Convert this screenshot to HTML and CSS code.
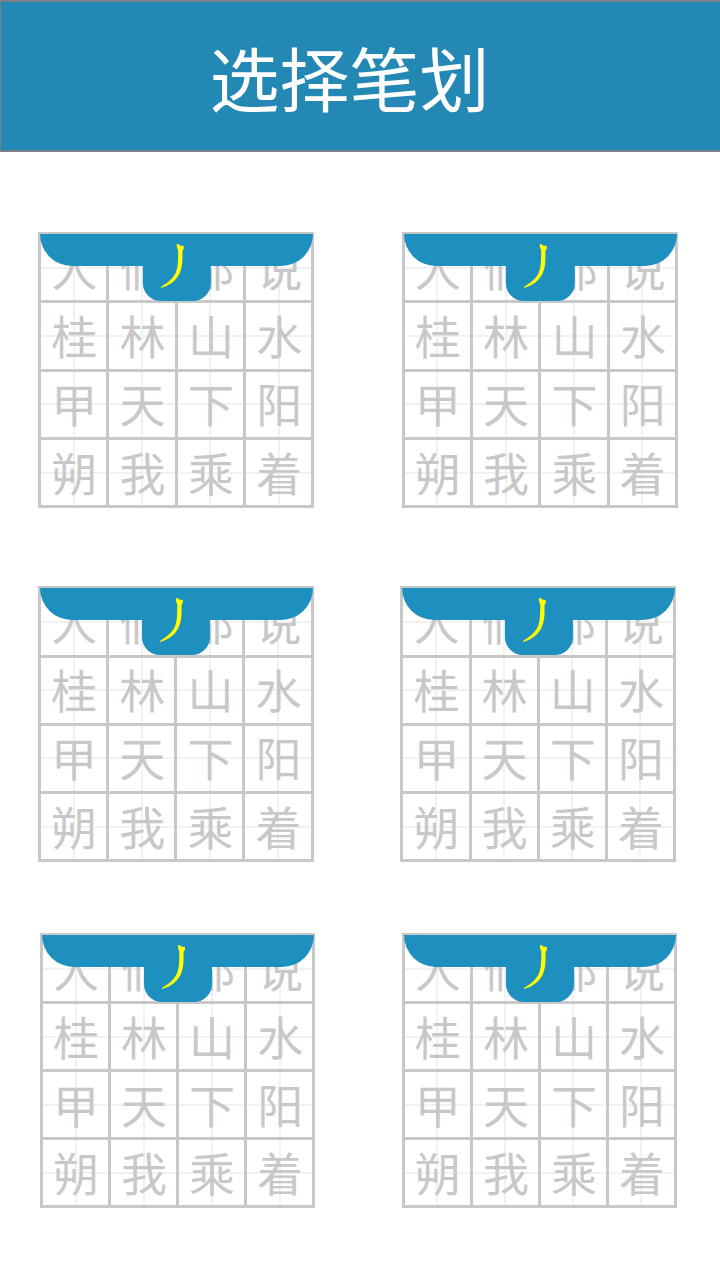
FILE: index.html
```html
<!DOCTYPE html>
<html lang="zh-CN">
<head>
<meta charset="utf-8">
<meta name="viewport" content="width=device-width, initial-scale=1">
<title>选择笔划</title>
<link rel="stylesheet" href="styles.css">
</head>
<body>
<header class="header"><h1 class="title">选择笔划</h1></header>
<main class="levels" id="levels">
  <div class="row"></div>
  <div class="row row-middle"></div>
  <div class="row row-last"></div>
</main>
<template id="card">
  <button class="card" type="button" aria-label="笔划 撇">
    <span class="sheet">
      <span class="cell">人</span><span class="cell">们</span><span class="cell">都</span><span class="cell">说</span>
      <span class="cell">桂</span><span class="cell">林</span><span class="cell">山</span><span class="cell">水</span>
      <span class="cell">甲</span><span class="cell">天</span><span class="cell">下</span><span class="cell">阳</span>
      <span class="cell">朔</span><span class="cell">我</span><span class="cell">乘</span><span class="cell">着</span>
    </span>
    <span class="banner">
      <span class="tab">
        <svg class="stroke" viewBox="0 0 24 44" aria-hidden="true"><path d="M16 0 L18 .3 L19 1.5 L23 2 L22.8 5 L21.6 7 C21.6 17 21.8 23 18.5 30 C15 37 8 42 0 44 L0 43 C7 38.5 12 35 15 28.5 C17.5 22 17.2 16 17.4 6.5 L16 3Z"/></svg>
      </span>
    </span>
  </button>
</template>
<script src="script.js"></script>
</body>
</html>
```
FILE: styles.css
```css
* {
  box-sizing: border-box;
}

body {
  margin: 0;
  background: #fff;
  font-family: "Liberation Sans", "Noto Sans CJK SC", sans-serif;
}

.header {
  display: flex;
  align-items: center;
  justify-content: center;
  height: 152px;
  padding: 14px 22px 0 0;
  border: 2px solid #7b8086;
  border-width: 2px 0 2px 1px;
  background: #2488b5;
}

.title {
  margin: 0;
  color: #fff;
  font-size: 70px;
  font-weight: 400;
  line-height: 80px;
}

.levels {
  padding: 80px 42px 72px 38px;
}

.row {
  display: flex;
  justify-content: space-between;
}

.row-middle {
  margin-top: 78px;
  padding-right: 2px;
}

.row-last {
  margin-top: 71px;
  padding: 0 1px 0 2px;
}

.card {
  position: relative;
  display: block;
  width: 43.2%;
  aspect-ratio: 1;
  padding: 0;
  border: 0;
  background: none;
  font: inherit;
  cursor: pointer;
}

.sheet {
  display: grid;
  grid-template-columns: repeat(4, 1fr);
  grid-template-rows: repeat(4, 1fr);
  gap: 3px;
  height: 100%;
  padding: 3px;
  background: #c8c8c8;
}

.cell {
  display: flex;
  align-items: center;
  justify-content: center;
  min-width: 0;
  min-height: 0;
  padding: 0 0 4px 1px;
  background:
    linear-gradient(#f1f1f1, #f1f1f1) center / 2px 100% no-repeat,
    linear-gradient(#f1f1f1, #f1f1f1) center / 100% 2px no-repeat,
    #fff;
  color: #c8c8c8;
  font-family: "Noto Sans CJK SC", sans-serif;
  font-size: 46px;
  line-height: 46px;
}

.banner {
  position: absolute;
  top: 2px;
  left: 2px;
  right: 1px;
  height: 32px;
  border-radius: 0 0 32px 32px;
  background: #1e90c0;
}

.tab {
  position: absolute;
  top: 0;
  left: 50%;
  width: 25%;
  height: 67px;
  transform: translateX(-50%);
  border-radius: 0 0 18px 18px;
  background: #1e90c0;
}

.stroke {
  position: absolute;
  top: 10px;
  left: 18px;
  width: 24px;
  height: 44px;
  fill: #ff0;
}
```
FILE: script.js
```js
const card = document.getElementById("card");
document.querySelectorAll(".row").forEach((row) => {
  for (let i = 0; i < 2; i += 1) {
    row.append(card.content.cloneNode(true));
  }
});
```
